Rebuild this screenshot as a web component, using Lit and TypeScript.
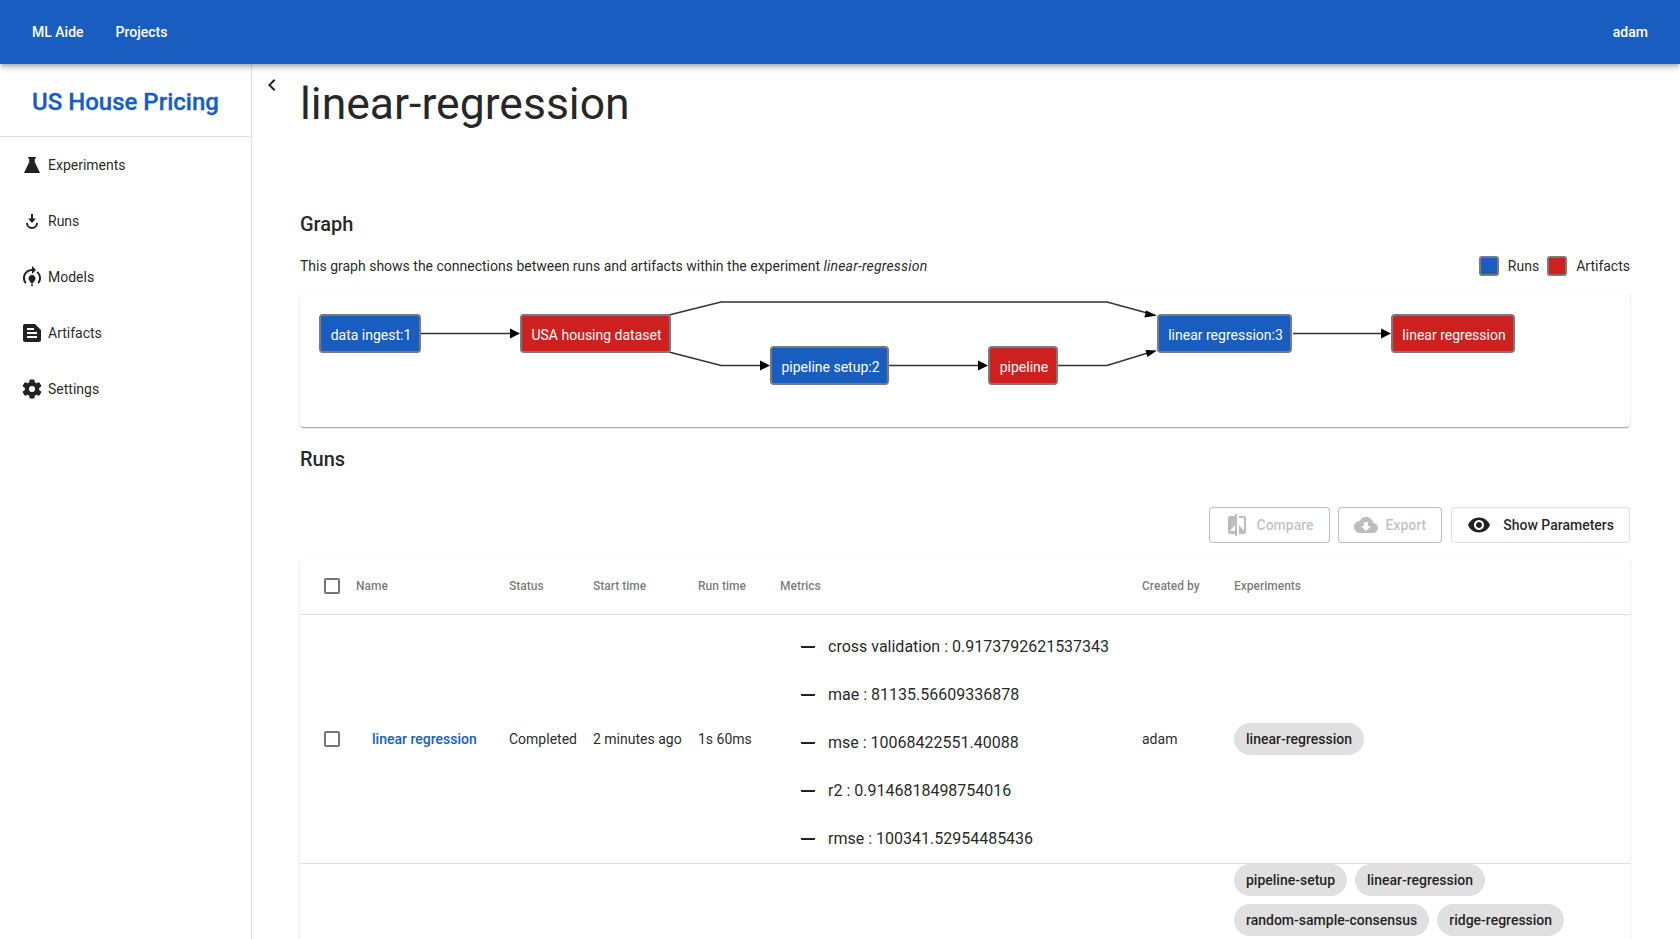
import { LitElement, html, css, svg } from "lit";
import { customElement } from "lit/decorators.js";

const I = {
  flask: "M8 4h8v1.500h-1.200v3.500L20 20H4l5.200-11V5.500H8z",
  runs: "M11 5h2v4.500h3L12 14l-4-4.500h3zM6 14h2a4 4 0 0 0 8 0h2a6 6 0 0 1-12 0z",
  models:
    "M15.5 13.5c0 2-2.5 3.5-2.5 5h-2c0-1.5-2.5-3-2.5-5 0-1.93 1.57-3.5 3.500-3.500s3.500 1.570 3.500 3.500zm-2.500 6h-2V21h2v-1.500zm6-6.500c0 1.680-.590 3.210-1.580 4.420l1.420 1.420C20.180 17.270 21 15.230 21 13c0-2.740-1.230-5.190-3.160-6.840l-1.420 1.420C17.990 8.860 19 10.820 19 13zm-3-8l-4-4v3c-4.970 0-9 4.030-9 9 0 2.230.820 4.270 2.160 5.840l1.420-1.420C5.590 16.210 5 14.680 5 13c0-3.860 3.140-7 7-7v3l4-4z",
  artifacts:
    "M19 3H5c-1.100 0-2 .900-2 2v14c0 1.100.900 2 2 2h14c1.100 0 2-.900 2-2V9l-6-6zM7 7h7v2H7zm10 10H7v-2h10zm0-4H7v-2h10z",
  settings:
    "M19.140 12.940c.040-.300.060-.610.060-.940 0-.320-.020-.640-.070-.940l2.030-1.580c.180-.140.230-.410.120-.610l-1.920-3.320c-.120-.220-.370-.290-.590-.220l-2.390.960c-.500-.380-1.030-.700-1.620-.940l-.360-2.540c-.040-.240-.240-.410-.480-.410h-3.840c-.240 0-.430.170-.470.410l-.360 2.540c-.590.240-1.130.570-1.620.940l-2.390-.960c-.220-.080-.470 0-.590.220L2.740 8.870c-.120.210-.080.470.120.610l2.030 1.580c-.050.300-.090.630-.090.940s.020.640.07.940l-2.030 1.580c-.180.140-.230.410-.120.610l1.920 3.320c.120.220.370.290.590.220l2.390-.960c.500.380 1.030.700 1.620.940l.360 2.540c.050.240.240.410.480.410h3.840c.240 0 .440-.170.470-.410l.360-2.540c.590-.240 1.130-.560 1.620-.940l2.390.960c.220.080.470 0 .590-.220l1.920-3.320c.120-.220.070-.470-.120-.610l-2.010-1.580zM12 15a3 3 0 1 1 0-6 3 3 0 0 1 0 6z",
  compare:
    "M10 3H5c-1.100 0-2 .900-2 2v14c0 1.100.900 2 2 2h5v2h2V1h-2v2zm0 15H5l5-6v6zm9-15h-5v2h5v13l-5-6v9h5c1.100 0 2-.900 2-2V5c0-1.100-.900-2-2-2z",
  cloud:
    "M19.350 10.040C18.670 6.590 15.640 4 12 4 9.110 4 6.600 5.640 5.350 8.040 2.340 8.360 0 10.910 0 14c0 3.310 2.690 6 6 6h13c2.760 0 5-2.240 5-5 0-2.640-2.050-4.780-4.650-4.960zM17 13l-5 5-5-5h3V9h4v4h3z",
  eye: "M12 4.500C7 4.500 2.730 7.610 1 12c1.730 4.390 6 7.500 11 7.500s9.270-3.110 11-7.500c-1.730-4.390-6-7.500-11-7.500zM12 17c-2.760 0-5-2.240-5-5s2.240-5 5-5 5 2.240 5 5-2.240 5-5 5zm0-8c-1.660 0-3 1.340-3 3s1.340 3 3 3 3-1.340 3-3-1.340-3-3-3z",
  chevron: "M15.400 7.400 14 6l-6 6 6 6 1.400-1.400L10.800 12z",
};

const icon = (d: string, cls = "") =>
  html`<svg class="icon ${cls}" viewBox="0 0 24 24" aria-hidden="true"><path d=${d}></path></svg>`;

interface GNode {
  x: number;
  y: number;
  w: number;
  h: number;
  label: string;
  kind: "run" | "artifact";
}

// Graph coordinates are relative to the card (origin at page 300, 292).
const NODES: GNode[] = [
  { x: 20, y: 23, w: 100, h: 37, label: "data ingest:1", kind: "run" },
  { x: 221, y: 23, w: 149, h: 37, label: "USA housing dataset", kind: "artifact" },
  { x: 471, y: 55, w: 117, h: 37, label: "pipeline setup:2", kind: "run" },
  { x: 689, y: 55, w: 68, h: 37, label: "pipeline", kind: "artifact" },
  { x: 858, y: 23, w: 133, h: 37, label: "linear regression:3", kind: "run" },
  { x: 1092, y: 23, w: 122, h: 37, label: "linear regression", kind: "artifact" },
];

const EDGES: string[] = [
  "M121 41.5H211",
  "M369 23L421 10H807L851 22",
  "M369 60L421 73.5H461",
  "M589 73.5H679",
  "M758 73.5H807L851 60",
  "M993 41.5H1082",
];

const HEADS: string[] = [
  "M220 41.5l-10-5v10z",
  "M857 23.5l-11-5-1.600 7z",
  "M470 73.500l-10-5v10z",
  "M688 73.500l-10-5v10z",
  "M857 58.500l-11.500-.5 2 7z",
  "M1091 41.500l-10-5v10z",
];

const METRICS = [
  "cross validation : 0.9173792621537343",
  "mae : 81135.56609336878",
  "mse : 10068422551.40088",
  "r2 : 0.9146818498754016",
  "rmse : 100341.52954485436",
];

const NAV = [
  { label: "Experiments", d: I.flask },
  { label: "Runs", d: I.runs },
  { label: "Models", d: I.models },
  { label: "Artifacts", d: I.artifacts },
  { label: "Settings", d: I.settings },
];

@customElement("app-root")
export class AppRoot extends LitElement {
  static styles = css`
    :host {
      display: block;
      height: 100vh;
      overflow: hidden;
      font-family: Roboto, "Liberation Sans", sans-serif;
      color: rgba(0, 0, 0, 0.87);
      background: #fff;
      font-size: 14px;
    }
    * {
      box-sizing: border-box;
    }
    .icon {
      width: 24px;
      height: 24px;
      fill: currentColor;
      fill-rule: evenodd;
      flex: none;
      display: block;
    }
    .appbar {
      position: relative;
      z-index: 2;
      height: 64px;
      background: #195dc0;
      color: #fff;
      display: flex;
      align-items: center;
      padding: 0 32px;
      gap: 32px;
      font-weight: 500;
      font-size: 14px;
      box-shadow: 0 2px 4px -1px rgba(0, 0, 0, 0.2), 0 4px 5px 0 rgba(0, 0, 0, 0.14),
        0 1px 10px 0 rgba(0, 0, 0, 0.12);
    }
    .user {
      margin-left: auto;
    }
    .body {
      display: flex;
      height: calc(100vh - 64px);
    }
    .side {
      width: 252px;
      flex: none;
      border-right: 1px solid #e0e0e0;
    }
    .project {
      height: 73px;
      border-bottom: 1px solid #e0e0e0;
      padding: 4px 32px 0;
      display: flex;
      align-items: center;
      font-size: 24px;
      font-weight: 500;
      -webkit-text-stroke: 0.3px #195dc0;
      color: #195dc0;
      white-space: nowrap;
    }
    .nav {
      display: flex;
      flex-direction: column;
    }
    .nav-item {
      height: 56px;
      display: flex;
      align-items: center;
      gap: 4px;
      padding-left: 20px;
      color: rgba(0, 0, 0, 0.87);
    }
    .nav-item .icon {
      color: #212121;
    }
    .main {
      flex: 1;
      min-width: 0;
      display: flex;
    }
    .toggle {
      width: 48px;
      flex: none;
      padding: 9px 0 0 8px;
    }
    .content {
      flex: 1;
      min-width: 0;
      padding-right: 50px;
    }
    h1 {
      margin: 0;
      font-size: 44.5px;
      font-weight: 400;
      line-height: 72px;
      height: 144px;
      padding-top: 4px;
    }
    h2 {
      margin: 0;
      font-size: 20px;
      font-weight: 500;
      line-height: 32px;
    }
    .desc {
      display: flex;
      align-items: center;
      justify-content: space-between;
      height: 24px;
      margin-top: 14px;
    }
    .desc i {
      letter-spacing: 0.19px;
    }
    .legend {
      display: flex;
      align-items: center;
    }
    .swatch {
      width: 20px;
      height: 20px;
      border-radius: 3px;
      border: 2px solid #7a7a7a;
      margin-right: 9px;
    }
    .legend span + .swatch {
      margin-left: 8px;
    }
    .run {
      background: #195dc0;
    }
    .artifact {
      background: #cf2020;
    }
    .card {
      background: #fff;
      border-radius: 4px;
      box-shadow: 0 2px 1px -1px rgba(0, 0, 0, 0.2), 0 1px 1px 0 rgba(0, 0, 0, 0.14),
        0 1px 3px 0 rgba(0, 0, 0, 0.12);
    }
    .graph {
      margin-top: 14px;
      height: 135px;
      position: relative;
    }
    .graph svg {
      display: block;
      position: absolute;
      inset: 0;
      width: 100%;
      height: 100%;
    }
    .edge {
      fill: none;
      stroke: #333;
      stroke-width: 1.5px;
    }
    .head {
      fill: #000;
    }
    .node {
      stroke: #7a7a7a;
      stroke-width: 2px;
    }
    .node.run {
      fill: #195dc0;
    }
    .node.artifact {
      fill: #cf2020;
    }
    .node-label {
      fill: #fff;
      font-size: 14px;
      text-anchor: middle;
      dominant-baseline: central;
    }
    .runs-title {
      margin-top: 16px;
    }
    .actions {
      display: flex;
      justify-content: flex-end;
      gap: 8px;
      margin-top: 32px;
      margin-bottom: 16px;
    }
    .btn {
      height: 36px;
      border: 1px solid rgba(0, 0, 0, 0.12);
      border-radius: 4px;
      display: flex;
      align-items: center;
      padding: 0 15px;
      gap: 12px;
      font-weight: 500;
      font-size: 14px;
      color: rgba(0, 0, 0, 0.87);
      background: #fff;
      font-family: inherit;
    }
    .btn.off {
      color: rgba(0, 0, 0, 0.26);
      border-color: rgba(0, 0, 0, 0.26);
      gap: 8px;
    }
    .btn.last {
      margin-left: 1px;
    }
    table {
      width: 100%;
      border-collapse: collapse;
      table-layout: fixed;
    }
    th {
      font-size: 12px;
      font-weight: 500;
      color: rgba(0, 0, 0, 0.54);
      text-align: left;
      height: 55px;
      border-bottom: 1px solid #e0e0e0;
      padding: 0;
    }
    td {
      padding: 0;
      border-bottom: 1px solid #e0e0e0;
      vertical-align: middle;
    }
    .cb {
      display: block;
      width: 16px;
      height: 16px;
      border: 2px solid #757575;
      border-radius: 2px;
      margin-left: 24px;
    }
    a {
      color: #195dc0;
      font-weight: 500;
      padding-left: 16px;
      text-decoration: none;
    }
    ul {
      margin: 0;
      padding: 8px 0 0;
      list-style: none;
    }
    li {
      height: 48px;
      display: flex;
      align-items: center;
      font-size: 16px;
      padding-left: 21px;
      gap: 13px;
      white-space: nowrap;
    }
    li::before {
      content: "";
      width: 14px;
      height: 2px;
      background: #212121;
      flex: none;
    }
    .chips {
      display: flex;
      flex-wrap: wrap;
      gap: 8px;
    }
    .chip {
      height: 32px;
      border-radius: 16px;
      background: #e0e0e0;
      font-weight: 500;
      padding: 0 12px;
      display: flex;
      align-items: center;
      font-size: 14px;
    }
    .second td {
      vertical-align: top;
      height: 90px;
    }
  `;

  render() {
    return html`
      <header class="appbar">
        <span>ML Aide</span><span>Projects</span><span class="user">adam</span>
      </header>
      <div class="body">
        <aside class="side">
          <div class="project">US House Pricing</div>
          <nav class="nav">
            ${NAV.map((n) => html`<div class="nav-item">${icon(n.d)}<span>${n.label}</span></div>`)}
          </nav>
        </aside>
        <main class="main">
          <div class="toggle">${icon(I.chevron)}</div>
          <div class="content">
            <h1>linear-regression</h1>
            <h2>Graph</h2>
            <div class="desc">
              <span>This graph shows the connections between runs and artifacts within the experiment <i>linear-regression</i></span>
              <div class="legend">
                <div class="swatch run"></div>
                <span>Runs</span>
                <div class="swatch artifact"></div>
                <span>Artifacts</span>
              </div>
            </div>
            <div class="card graph">
              <svg>
                ${EDGES.map((d) => svg`<path class="edge" d=${d}></path>`)}
                ${HEADS.map((d) => svg`<path class="head" d=${d}></path>`)}
                ${NODES.map(
                  (n) => svg`
                    <rect class="node ${n.kind}" x=${n.x} y=${n.y} width=${n.w} height=${n.h} rx="3"></rect>
                    <text class="node-label" x=${n.x + n.w / 2 + 1} y=${n.y + n.h / 2 + 1}>${n.label}</text>`
                )}
              </svg>
            </div>
            <h2 class="runs-title">Runs</h2>
            <div class="actions">
              <button class="btn off">${icon(I.compare)}Compare</button>
              <button class="btn off">${icon(I.cloud)}Export</button>
              <button class="btn last">${icon(I.eye)}<span>Show Parameters</span></button>
            </div>
            <div class="card">
              <table>
                <colgroup>
                  <col style="width:56px" /><col style="width:153px" /><col style="width:84px" />
                  <col style="width:105px" /><col style="width:82px" /><col style="width:362px" />
                  <col style="width:92px" /><col />
                </colgroup>
                <thead>
                  <tr>
                    <th><span class="cb"></span></th>
                    <th>Name</th><th>Status</th><th>Start time</th><th>Run time</th>
                    <th>Metrics</th><th>Created by</th><th>Experiments</th>
                  </tr>
                </thead>
                <tbody>
                  <tr>
                    <td><span class="cb"></span></td>
                    <td><a href="#">linear regression</a></td>
                    <td>Completed</td>
                    <td>2 minutes ago</td>
                    <td>1s 60ms</td>
                    <td><ul>${METRICS.map((m) => html`<li>${m}</li>`)}</ul></td>
                    <td>adam</td>
                    <td><div class="chips"><span class="chip">linear-regression</span></div></td>
                  </tr>
                  <tr class="second">
                    <td></td><td></td><td></td><td></td><td></td><td></td><td></td>
                    <td>
                      <div class="chips">
                        <span class="chip">pipeline-setup</span>
                        <span class="chip">linear-regression</span>
                        <span class="chip">random-sample-consensus</span>
                        <span class="chip">ridge-regression</span>
                      </div>
                    </td>
                  </tr>
                </tbody>
              </table>
            </div>
          </div>
        </main>
      </div>
    `;
  }
}
